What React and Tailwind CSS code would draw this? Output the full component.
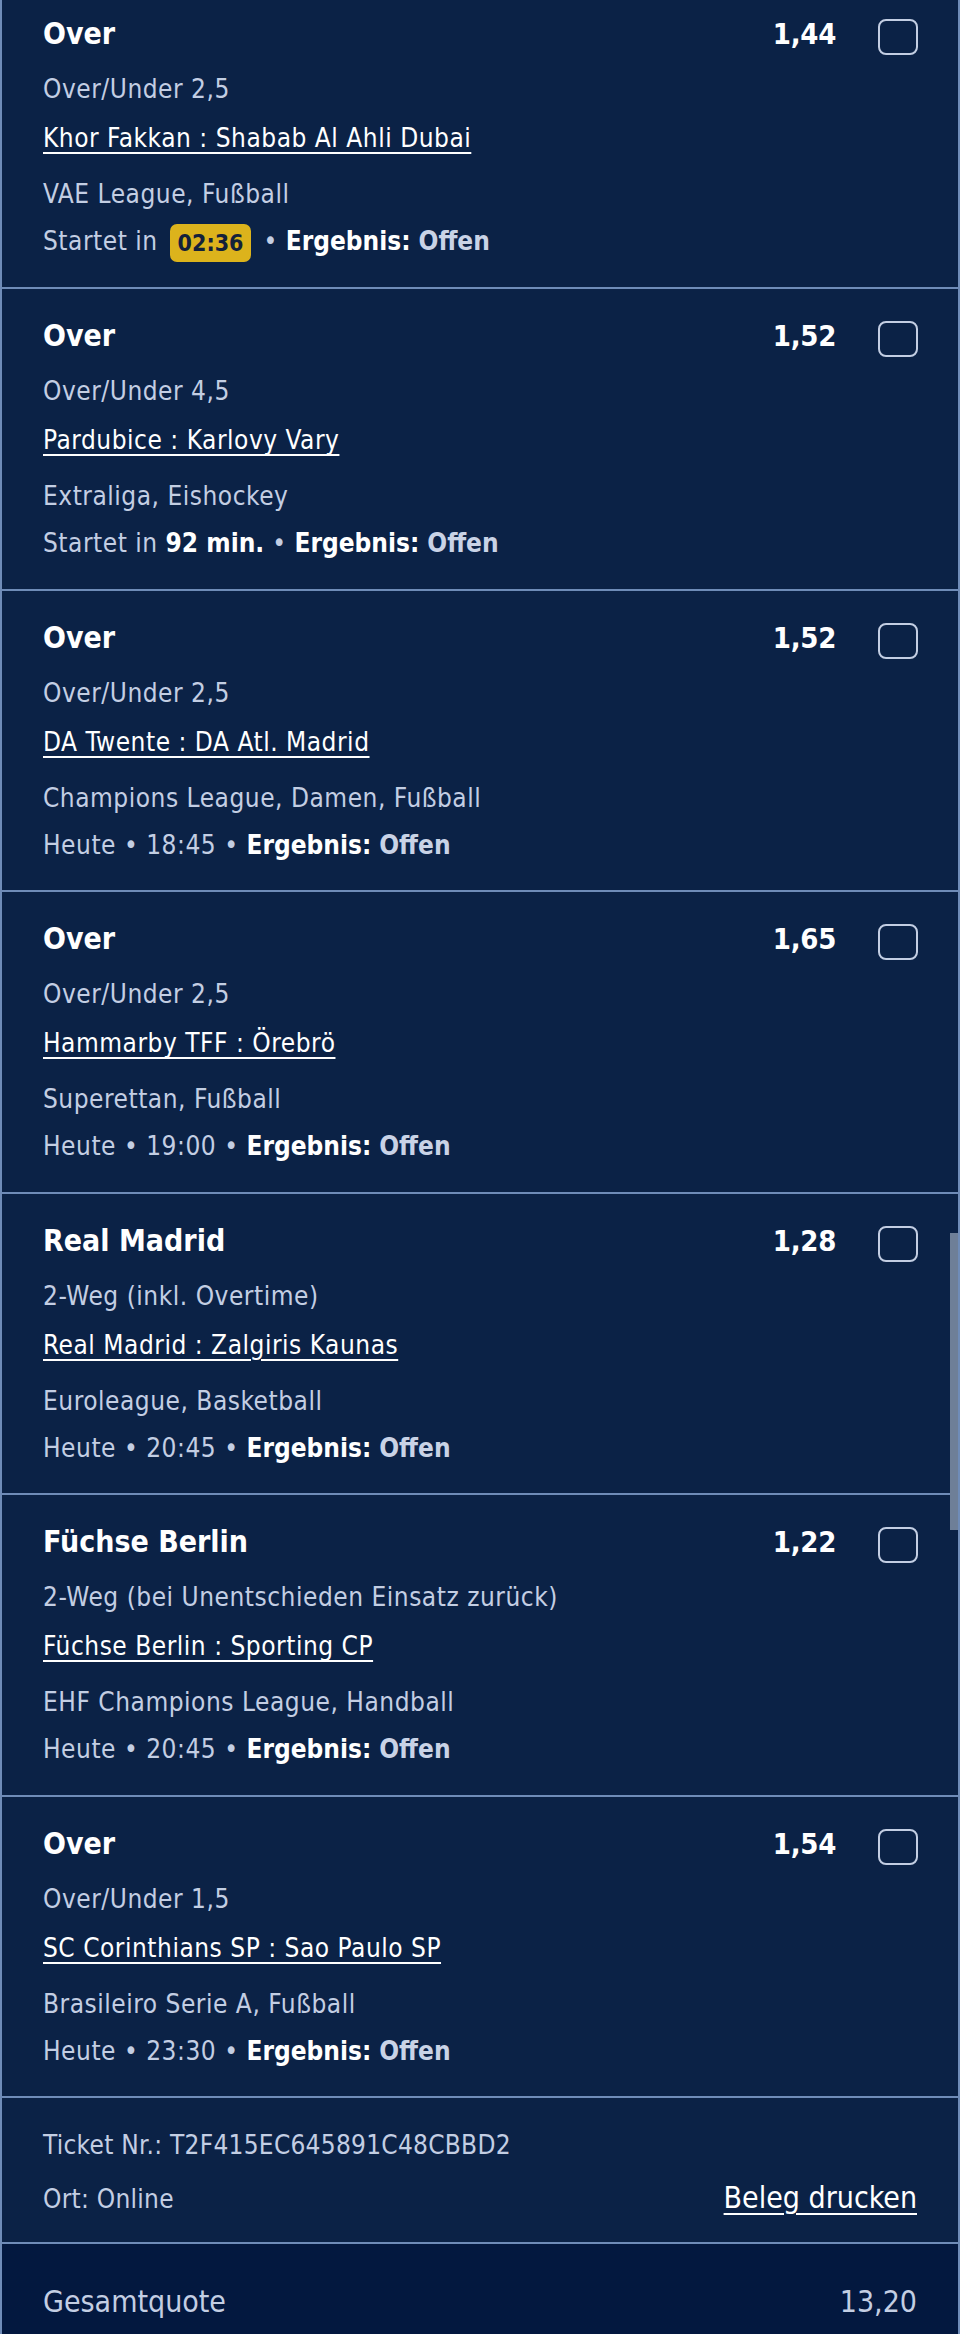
import { Fragment } from 'react'

const FONT = { fontFamily: "'Liberation Sans Narrow', 'DejaVu Sans Condensed', 'Liberation Sans', sans-serif" }

const BETS = [
  {
    pick: 'Over',
    market: 'Over/Under 2,5',
    match: 'Khor Fakkan : Shabab Al Ahli Dubai',
    league: 'VAE League, Fußball',
    start: { kind: 'countdown', value: '02:36' },
    odds: '1,44',
  },
  {
    pick: 'Over',
    market: 'Over/Under 4,5',
    match: 'Pardubice : Karlovy Vary',
    league: 'Extraliga, Eishockey',
    start: { kind: 'minutes', value: '92 min.' },
    odds: '1,52',
  },
  {
    pick: 'Over',
    market: 'Over/Under 2,5',
    match: 'DA Twente : DA Atl. Madrid',
    league: 'Champions League, Damen, Fußball',
    start: { kind: 'today', value: '18:45' },
    odds: '1,52',
  },
  {
    pick: 'Over',
    market: 'Over/Under 2,5',
    match: 'Hammarby TFF : Örebrö',
    league: 'Superettan, Fußball',
    start: { kind: 'today', value: '19:00' },
    odds: '1,65',
  },
  {
    pick: 'Real Madrid',
    market: '2-Weg (inkl. Overtime)',
    match: 'Real Madrid : Zalgiris Kaunas',
    league: 'Euroleague, Basketball',
    start: { kind: 'today', value: '20:45' },
    odds: '1,28',
  },
  {
    pick: 'Füchse Berlin',
    market: '2-Weg (bei Unentschieden Einsatz zurück)',
    match: 'Füchse Berlin : Sporting CP',
    league: 'EHF Champions League, Handball',
    start: { kind: 'today', value: '20:45' },
    odds: '1,22',
  },
  {
    pick: 'Over',
    market: 'Over/Under 1,5',
    match: 'SC Corinthians SP : Sao Paulo SP',
    league: 'Brasileiro Serie A, Fußball',
    start: { kind: 'today', value: '23:30' },
    odds: '1,54',
  },
]

function StartInfo({ start }) {
  if (start.kind === 'countdown') {
    return (
      <>
        Startet in{' '}
        <span className="mx-[4px] inline-block rounded-[7px] bg-[#dcb31c] px-[8px] align-middle text-[23px] leading-[38px] font-semibold tracking-normal text-[#13213a]">
          {start.value}
        </span>
      </>
    )
  }
  if (start.kind === 'minutes') {
    return (
      <>
        Startet in <span className="font-bold tracking-normal text-white">{start.value}</span>
      </>
    )
  }
  return <>Heute • {start.value}</>
}

function BetRow({ bet }) {
  return (
    <div className="flex items-start border-b-2 border-[#6f8cb8] pt-[29px] pr-[40px] pb-[25.5px] pl-[41px]">
      <div className="min-w-0 flex-1">
        <div className="text-[30px] leading-[36px] font-bold text-white">{bet.pick}</div>
        <div className="mt-[18px] text-[26px] leading-[39px] tracking-[0.02em] text-[#c3cee3]">{bet.market}</div>
        <div className="mt-[10px] text-[26px] leading-[39px] tracking-[0.02em] text-white underline decoration-2 underline-offset-[5px]">
          {bet.match}
        </div>
        <div className="mt-[17px] text-[26px] leading-[39px] tracking-[0.02em] text-[#c3cee3]">{bet.league}</div>
        <div className="mt-[8px] text-[26px] leading-[39px] tracking-[0.02em] text-[#c3cee3]">
          <StartInfo start={bet.start} /> •{' '}
          <span className="font-bold tracking-normal text-white">Ergebnis:</span>{' '}
          <span className="font-bold tracking-normal text-[#c9d3e6]">Offen</span>
        </div>
      </div>
      <div className="flex items-start gap-[42px]">
        <span className="text-[29px] leading-[36px] font-bold tracking-[-0.01em] text-white">{bet.odds}</span>
        <span className="mt-[3px] block h-[36px] w-[40px] rounded-[8px] border-2 border-[#c3cee3]" />
      </div>
    </div>
  )
}

export default function App() {
  return (
    <div className="relative h-[2334px] overflow-hidden bg-[#0b2246]" style={FONT}>
      <div className="-mt-[13px] border-x-2 border-[#6f8cb8]">
        {BETS.map((bet, i) => (
          <Fragment key={i}>
            <BetRow bet={bet} />
          </Fragment>
        ))}

        <div className="border-b-2 border-[#6f8cb8] pt-[28px] pr-[41px] pb-[23px] pl-[41px]">
          <div className="text-[26px] leading-[39px] tracking-[0.01em] text-[#c3cee3]">Ticket Nr.: T2F415EC645891C48CBBD2</div>
          <div className="mt-[13px] flex items-baseline justify-between">
            <span className="text-[26px] leading-[39px] tracking-[0.01em] text-[#c3cee3]">Ort: Online</span>
            <span className="text-[30px] leading-[39px] text-white underline decoration-2 underline-offset-[5px]">
              Beleg drucken
            </span>
          </div>
        </div>

        <div className="flex items-baseline justify-between bg-[#03183f] pt-[38px] pr-[41px] pb-[40px] pl-[41px] text-[30px] leading-[40px] text-[#c3cee3]">
          <span>Gesamtquote</span>
          <span>13,20</span>
        </div>
      </div>

      {/* scrollbar thumb */}
      <div className="absolute top-[1233px] right-[2px] h-[297px] w-[8px] bg-[#6e7f98]" />
    </div>
  )
}
